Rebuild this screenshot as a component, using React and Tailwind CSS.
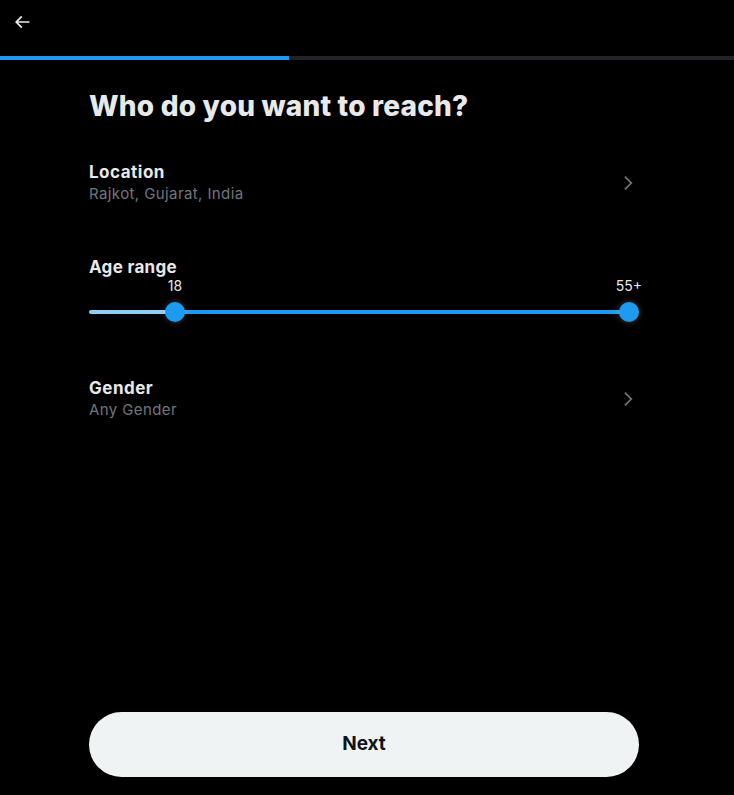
import React from "react"

function BackArrow() {
  return (
    <svg viewBox="0 0 24 24" className="h-5 w-5 fill-[#e7e9ea]">
      <path d="M7.414 13l5.043 5.04-1.414 1.42L3.586 12l7.457-7.46 1.414 1.42L7.414 11H21v2H7.414z" />
    </svg>
  )
}

function Chevron() {
  return (
    <svg viewBox="0 0 24 24" className="h-5 w-5 fill-[#71767b]">
      <path d="M14.586 12L7.543 4.96l1.414-1.42L17.414 12l-8.457 8.46-1.414-1.42L14.586 12z" />
    </svg>
  )
}

function OptionRow({ title, value }) {
  return (
    <button className="flex w-full items-center justify-between text-left">
      <div className="flex flex-col">
        <span className="text-[17px] font-bold leading-5 tracking-[0.5px] text-[#e7e9ea]">{title}</span>
        <span className="mt-[2px] text-[15px] leading-5 tracking-[0.4px] text-[#71767b]">{value}</span>
      </div>
      <div className="mr-[1px]">
        <Chevron />
      </div>
    </button>
  )
}

export default function App() {
  return (
    <div className="flex h-screen w-full flex-col bg-black font-['Inter',sans-serif] text-[#e7e9ea]">
      {/* Header */}
      <div className="flex h-14 items-center px-3">
        <button className="pb-[12px]">
          <BackArrow />
        </button>
      </div>

      {/* Progress */}
      <div className="flex h-1 w-full bg-[#202327]">
        <div className="h-full w-[289px] bg-[#1d9bf0]"></div>
      </div>

      {/* Content */}
      <div className="flex flex-1 flex-col pl-[89px]">
        <div className="flex w-[550px] flex-1 flex-col">
          <h1 className="mt-[30px] text-[28px] font-extrabold leading-8 tracking-[0.2px] text-[#e7e9ea]">
            Who do you want to reach?
          </h1>

          <div className="mt-[40px]">
            <OptionRow title="Location" value="Rajkot, Gujarat, India" />
          </div>

          {/* Age range */}
          <div className="mt-[53px]">
            <span className="block text-[17px] font-bold leading-5 tracking-[0.3px] text-[#e7e9ea]">Age range</span>
            <div className="relative mt-[1px] h-[59px]">
              <span className="absolute left-[86px] -top-[2px] -translate-x-1/2 text-[14px] leading-5 text-[#e7e9ea]">18</span>
              <span className="absolute left-[540px] -top-[2px] -translate-x-1/2 text-[14px] leading-5 text-[#e7e9ea]">55+</span>
              <div className="absolute left-0 top-[32px] flex h-1 w-[545px] rounded-full">
                <div className="h-full w-[86px] rounded-l-full bg-[#8ecdf8]"></div>
                <div className="h-full w-[454px] bg-[#1d9bf0]"></div>
              </div>
              <div className="absolute left-[76px] top-[24px] h-5 w-5 rounded-full bg-[#1d9bf0] shadow-[0_0_6px_rgba(255,255,255,0.25)]"></div>
              <div className="absolute left-[530px] top-[24px] h-5 w-5 rounded-full bg-[#1d9bf0] shadow-[0_0_6px_rgba(255,255,255,0.25)]"></div>
            </div>
          </div>

          <div className="mt-[41px]">
            <OptionRow title="Gender" value="Any Gender" />
          </div>

          <div className="flex-1"></div>

          <button className="mb-[18px] flex h-[65px] w-full items-center justify-center rounded-full bg-[#eff3f4] text-[19px] font-bold text-[#0f1419]">
            Next
          </button>
        </div>
      </div>
    </div>
  )
}
